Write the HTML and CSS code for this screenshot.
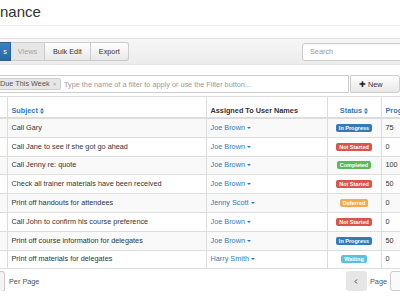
FILE: index.html
```html
<!DOCTYPE html>
<html>
<head>
<meta charset="utf-8">
<link rel="stylesheet" href="styles.css">
</head>
<body>
<div class="page">
  <h1 class="title">nance</h1>
  <div class="toolbar">
    <div class="btn-group">
      <button class="btn btn-primary">s</button>
      <button class="btn btn-disabled">Views</button>
      <button class="btn">Bulk Edit</button>
      <button class="btn">Export</button>
    </div>
    <div class="search">Search</div>
  </div>
  <div class="filter-row">
    <div class="filter-box">
      <span class="tag">Due This Week <span class="tag-x">×</span></span>
      <span class="placeholder">Type the name of a filter to apply or use the Filter button...</span>
    </div>
    <button class="btn-new"><span class="plus">✚</span> New</button>
  </div>
  <table class="grid">
    <colgroup>
      <col class="c0"><col class="c1"><col class="c2"><col class="c3"><col class="c4">
    </colgroup>
    <thead>
      <tr>
        <th></th>
        <th class="sort">Subject <svg class="sort-ic" viewBox="0 0 6 9"><path d="M3 0L6 3.6H0Z M3 9L6 5.4H0Z"/></svg></th>
        <th>Assigned To User Names</th>
        <th class="sort center">Status <svg class="sort-ic" viewBox="0 0 6 9"><path d="M3 0L6 3.6H0Z M3 9L6 5.4H0Z"/></svg></th>
        <th class="sort">Prog</th>
      </tr>
    </thead>
    <tbody>
      <tr><td></td><td>Call Gary</td><td><span class="user">Joe Brown <span class="caret"></span></span></td><td class="center"><span class="label l-blue">In Progress</span></td><td>75</td></tr>
      <tr><td></td><td>Call Jane to see if she got go ahead</td><td><span class="user">Joe Brown <span class="caret"></span></span></td><td class="center"><span class="label l-red">Not Started</span></td><td>0</td></tr>
      <tr><td></td><td>Call Jenny re: quote</td><td><span class="user">Joe Brown <span class="caret"></span></span></td><td class="center"><span class="label l-green">Completed</span></td><td>100</td></tr>
      <tr><td></td><td>Check all trainer materials have been received</td><td><span class="user">Joe Brown <span class="caret"></span></span></td><td class="center"><span class="label l-red">Not Started</span></td><td>50</td></tr>
      <tr><td></td><td>Print off handouts for attendees</td><td><span class="user">Jenny Scott <span class="caret"></span></span></td><td class="center"><span class="label l-orange">Deferred</span></td><td>0</td></tr>
      <tr><td></td><td>Call John to confirm his course preference</td><td><span class="user">Joe Brown <span class="caret"></span></span></td><td class="center"><span class="label l-red">Not Started</span></td><td>0</td></tr>
      <tr><td></td><td>Print off course information for delegates</td><td><span class="user">Joe Brown <span class="caret"></span></span></td><td class="center"><span class="label l-blue">In Progress</span></td><td>50</td></tr>
      <tr><td></td><td>Print off materials for delegates</td><td><span class="user">Harry Smith <span class="caret"></span></span></td><td class="center"><span class="label l-cyan">Waiting</span></td><td>0</td></tr>
    </tbody>
  </table>
  <div class="footer">
    <div class="per-page">
      <span class="select-stub"></span>
      <span class="foot-text">Per Page</span>
    </div>
    <div class="pager">
      <button class="prev"><svg viewBox="0 0 6 8" class="chev"><path d="M4.5 0.8L1.5 4L4.5 7.2" fill="none" stroke="#444" stroke-width="1.6"/></svg></button>
      <span class="foot-text">Page</span>
      <span class="page-box"></span>
    </div>
  </div>
</div>
</body>
</html>
```
FILE: styles.css
```css
html, body {
  margin: 0;
  padding: 0;
  background: #fff;
}
body {
  width: 400px;
  height: 300px;
  overflow: hidden;
  font-family: "Liberation Sans", Arial, sans-serif;
  font-size: 7.3px;
  color: #333;
}
.page {
  width: 400px;
  overflow: hidden;
}
.title {
  margin: 0;
  height: 25px;
  line-height: 24px;
  font-size: 15px;
  font-weight: normal;
  color: #333;
  border-bottom: 1px solid #eee;
}
.toolbar {
  margin-top: 12px;
  height: 25px;
  border-top: 1px solid #e3e3e3;
  border-bottom: 1px solid #e3e3e3;
  background: linear-gradient(#f6f6f6, #ececec);
  display: flex;
  align-items: flex-start;
  justify-content: space-between;
}
.btn-group {
  display: flex;
  margin-top: 3px;
}
.btn {
  height: 19px;
  margin: 0;
  padding: 0 8px;
  font-family: inherit;
  font-size: 7.3px;
  color: #333;
  border: 1px solid #ccc;
  border-left-width: 0;
  background: linear-gradient(#fff, #e8e8e8);
  line-height: 17px;
}
.btn:last-child {
  border-radius: 0 3px 3px 0;
}
.btn-primary {
  width: 11px;
  padding: 0 3px 0 0;
  text-align: right;
  color: #fff;
  background: linear-gradient(#3b82c0, #2a67a0);
  border: 1px solid #2a5f90;
  border-left: 0;
}
.btn-disabled {
  color: #a5a5a5;
  background: #e6e6e6;
  width: 34px;
  padding: 0;
}
.search {
  margin-top: 4px;
  width: 108px;
  height: 16px;
  box-sizing: content-box;
  border: 1px solid #ccc;
  border-radius: 3px;
  background: #fff;
  color: #999;
  line-height: 16px;
  padding-left: 7px;
  margin-right: -19px;
  box-shadow: inset 0 1px 1px rgba(0,0,0,0.05);
}
.filter-row {
  margin-top: 10px;
  display: flex;
  height: 18px;
}
.filter-box {
  width: 365px;
  height: 16px;
  border: 1px solid #ccc;
  border-left: 0;
  display: flex;
  align-items: center;
  background: #fff;
}
.tag {
  height: 10px;
  line-height: 10px;
  background: #e6e6e6;
  border: 1px solid #ccc;
  border-left: 0;
  border-radius: 0 2px 2px 0;
  padding: 0 3px 0 0;
  color: #555;
  width: 57px;
  white-space: nowrap;
}
.tag-x {
  color: #999;
  font-size: 6px;
  margin-left: 1px;
}
.placeholder {
  margin-left: 3px;
  color: #9a9a9a;
  white-space: nowrap;
}
.btn-new {
  margin: 0;
  margin-left: 1px;
  width: 50px;
  height: 18px;
  flex-shrink: 0;
  border: 1px solid #ccc;
  border-radius: 0 3px 3px 0;
  background: linear-gradient(#fff, #e8e8e8);
  font-family: inherit;
  font-size: 7.3px;
  color: #333;
  text-align: left;
  padding: 0 0 0 8px;
}
.plus {
  font-size: 7.5px;
  color: #222;
}
.grid {
  margin-top: 3px;
  width: 400px;
  border-collapse: collapse;
  table-layout: fixed;
}
.c0 { width: 7px; }
.c1 { width: 199px; }
.c2 { width: 121px; }
.c3 { width: 54px; }
.c4 { width: 19px; }
.grid th, .grid td {
  border: 1px solid #ddd;
  padding: 0 4px;
  text-align: left;
  white-space: nowrap;
  overflow: hidden;
}
.grid th:first-child, .grid td:first-child {
  border-left: 0;
  padding: 0;
}
.grid th:last-child, .grid td:last-child {
  border-right: 0;
  padding-right: 0;
  text-overflow: clip;
}
.grid th {
  padding-top: 9px;
  padding-bottom: 1px;
  vertical-align: bottom;
  font-weight: bold;
  color: #333;
  border-bottom: 2px solid #ddd;
  line-height: 10px;
}
.grid th.sort {
  color: #337ab7;
}
.grid td {
  height: 17.8px;
  line-height: 10px;
  vertical-align: middle;
}
.grid tbody tr:nth-child(odd) td {
  background: #f9f9f9;
}
.grid .center, .grid th.center {
  text-align: center;
}
.sort-ic {
  width: 4px;
  height: 6px;
  fill: #337ab7;
  vertical-align: -1px;
}
.user {
  color: #337ab7;
}
.caret {
  display: inline-block;
  width: 0;
  height: 0;
  border-left: 2.5px solid transparent;
  border-right: 2.5px solid transparent;
  border-top: 2.5px solid #337ab7;
  vertical-align: 1px;
}
.label {
  display: inline-block;
  font-size: 5.5px;
  font-weight: bold;
  color: #fff;
  line-height: 8px;
  padding: 0 3px;
  border-radius: 2px;
}
.l-blue { background: #337ab7; }
.l-red { background: #d9534f; }
.l-green { background: #5cb85c; }
.l-orange { background: #f0ad4e; }
.l-cyan { background: #5bc0de; }
.footer {
  display: flex;
  justify-content: space-between;
  margin-top: 2px;
  height: 20px;
}
.per-page, .pager {
  display: flex;
  align-items: center;
}
.select-stub {
  width: 4px;
  height: 19px;
  border: 1px solid #ccc;
  border-left: 0;
  border-radius: 0 3px 3px 0;
  background: #f4f4f4;
}
.foot-text {
  color: #555;
  margin-left: 4px;
}
.prev {
  width: 21px;
  height: 20px;
  margin: 0;
  padding: 0;
  border: 0;
  border-radius: 3px;
  background: #e6e6e6;
  display: flex;
  align-items: center;
  justify-content: center;
}
.chev {
  width: 4px;
  height: 5px;
}
.pager .foot-text {
  margin-left: 3px;
}
.page-box {
  margin-left: 3px;
  width: 20px;
  height: 18px;
  border: 1px solid #ccc;
  border-radius: 3px;
  margin-right: -12px;
  background: #fafafa;
}
```
